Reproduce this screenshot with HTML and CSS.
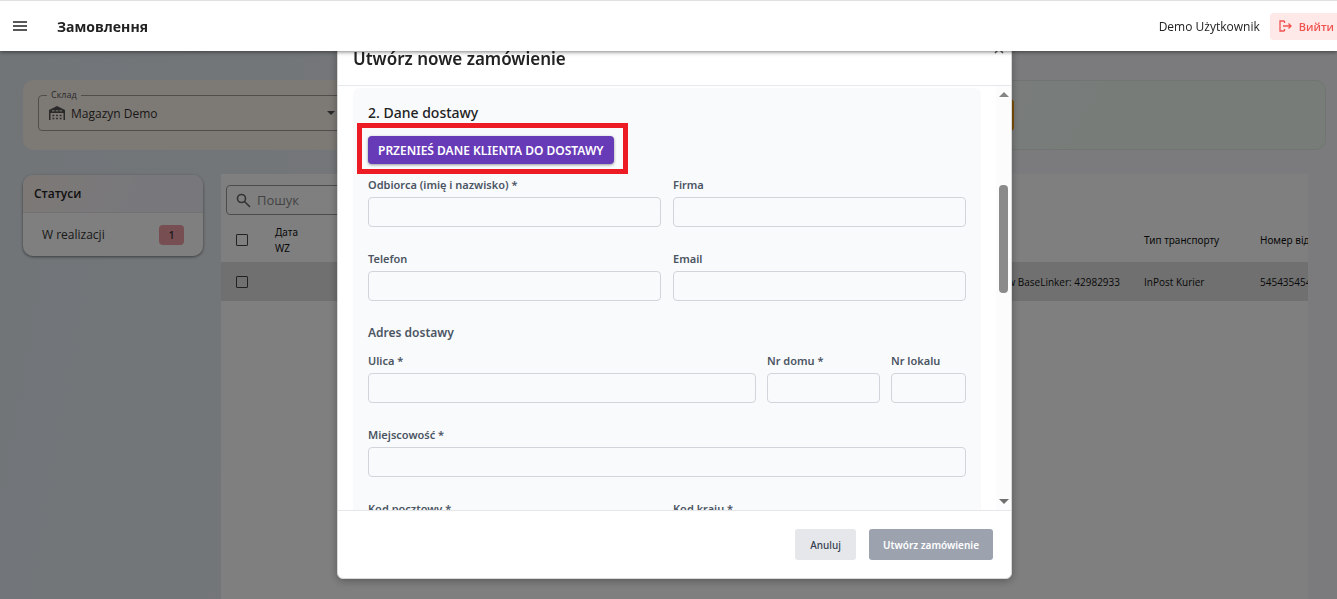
FILE: index.html
```html
<!DOCTYPE html>
<html lang="uk">
<head>
    <meta charset="UTF-8">
    <meta name="viewport" content="width=device-width, initial-scale=1.0">
    <title>Замовлення</title>
    <link rel="stylesheet" href="styles.css">
</head>
<body>
    <header class="topbar">
        <button class="menu-btn" aria-label="Menu">
            <svg width="14" height="10" viewBox="0 0 14 10"><path d="M0 1h14M0 5h14M0 9h14" stroke="#222" stroke-width="1.5"/></svg>
        </button>
        <h1>Замовлення</h1>
        <span class="user">Demo Użytkownik</span>
        <button class="logout">
            <svg width="13" height="12" viewBox="0 0 13 12" fill="none" stroke="#ef5350" stroke-width="1.3"><path d="M5.5 1H1v10h4.500M5.500 1v2M5.500 11V9M4 6h8M9.500 3.500L12 6 9.500 8.500"/></svg>
            Вийти
        </button>
    </header>

    <main class="page">
        <div class="filters">
            <div class="card card-warm">
                <div class="select-box">
                    <label for="warehouse">Склад</label>
                    <svg class="warehouse-icon" width="16" height="14" viewBox="0 0 16 14"><path d="M0 4l8-4 8 4v10h-1.500V7h-13v7H0z" fill="#555"/><path d="M3 4.800h2.500M6.800 4.800h2.500M10.500 4.800H13" stroke="#c8c0b8" stroke-width="1.400"/><path d="M3.500 9.500h9M3.500 12.500h9" stroke="#555" stroke-width="1.500" stroke-dasharray="1.800 1.800"/></svg>
                    <select id="warehouse"><option>Magazyn Demo</option></select>
                    <svg class="arrow" width="8" height="4" viewBox="0 0 8 4"><path d="M0 0h8L4 4z" fill="#555"/></svg>
                </div>
            </div>
            <div class="card card-green">
                <button class="add-btn" aria-label="Utwórz"></button>
            </div>
        </div>

        <div class="content">
            <aside class="statuses">
                <h2>Статуси</h2>
                <a href="#" class="status">W realizacji <span class="badge">1</span></a>
            </aside>

            <section class="orders">
                <div class="search">
                    <svg width="15" height="15" viewBox="0 0 15 15" fill="none" stroke="#666" stroke-width="1.6"><circle cx="5.500" cy="5.500" r="4"/><path d="M8.500 8.500L14 14"/></svg>
                    <input type="text" placeholder="Пошук" aria-label="Пошук">
                </div>
                <table>
                    <thead>
                        <tr>
                            <th class="col-check"><input type="checkbox" aria-label="Всі"></th>
                            <th class="col-date">Дата WZ</th>
                            <th></th>
                            <th class="col-transport">Тип транспорту</th>
                            <th class="col-number">Номер від</th>
                        </tr>
                    </thead>
                    <tbody>
                        <tr>
                            <td class="col-check"><input type="checkbox" aria-label="42982933"></td>
                            <td></td>
                            <td class="note">w BaseLinker: 42982933</td>
                            <td>InPost Kurier</td>
                            <td>545435454</td>
                        </tr>
                    </tbody>
                </table>
            </section>
        </div>
    </main>

    <div class="overlay">
        <form class="modal">
            <div class="modal-header">
                <h2>Utwórz nowe zamówienie</h2>
                <button type="button" class="close" aria-label="Zamknij">
                    <svg width="10" height="10" viewBox="0 0 10 10"><path d="M1 1l8 8M9 1L1 9" stroke="#555" stroke-width="1.5"/></svg>
                </button>
            </div>

            <div class="modal-body">
                <div class="scroll-area">
                    <div class="delivery">
                        <h3>2. Dane dostawy</h3>
                        <div class="highlight">
                            <button type="button" class="copy-btn">PRZENIEŚ DANE KLIENTA DO DOSTAWY</button>
                        </div>
                        <div class="grid halves">
                            <div class="field"><label for="name">Odbiorca (imię i nazwisko) *</label><input type="text" id="name"></div>
                            <div class="field"><label for="company">Firma</label><input type="text" id="company"></div>
                            <div class="field"><label for="phone">Telefon</label><input type="text" id="phone"></div>
                            <div class="field"><label for="email">Email</label><input type="email" id="email"></div>
                        </div>
                        <h4>Adres dostawy</h4>
                        <div class="grid street">
                            <div class="field"><label for="street">Ulica *</label><input type="text" id="street"></div>
                            <div class="field"><label for="house">Nr domu *</label><input type="text" id="house"></div>
                            <div class="field"><label for="flat">Nr lokalu</label><input type="text" id="flat"></div>
                        </div>
                        <div class="grid">
                            <div class="field"><label for="city">Miejscowość *</label><input type="text" id="city"></div>
                        </div>
                        <div class="grid halves">
                            <div class="field"><label for="zip">Kod pocztowy *</label><input type="text" id="zip"></div>
                            <div class="field"><label for="country">Kod kraju *</label><input type="text" id="country"></div>
                        </div>
                    </div>
                </div>
                <div class="scrollbar">
                    <svg width="10" height="5" viewBox="0 0 10 5"><path d="M0 5h10L5 0z" fill="#858585"/></svg>
                    <div class="track"><div class="thumb"></div></div>
                    <svg width="10" height="5" viewBox="0 0 10 5"><path d="M0 0h10L5 5z" fill="#707070"/></svg>
                </div>
            </div>

            <div class="modal-footer">
                <button type="button" class="btn btn-cancel">Anuluj</button>
                <button type="submit" class="btn btn-submit">Utwórz zamówienie</button>
            </div>
        </form>
    </div>
</body>
</html>
```
FILE: styles.css
```css
* {
    box-sizing: border-box;
}

body {
    margin: 0;
    height: 100vh;
    overflow: hidden;
    font-family: "Open Sans", "Noto Sans", sans-serif;
    font-size: 12px;
    color: #222;
    background: linear-gradient(100deg, #e2eaf1 0%, #e8edf2 25%, #f6f7fa 70%);
}

h1, h2, h3, h4 {
    margin: 0;
    font-weight: 600;
}

button, input, select {
    font-family: inherit;
}

button {
    border: 0;
    cursor: pointer;
}

/* top bar */
.topbar {
    position: relative;
    z-index: 20;
    display: flex;
    align-items: center;
    height: 51px;
    padding-left: 13px;
    background: #fff;
    border-top: 1px solid #e0e0e0;
    box-shadow: 0 1px 4px rgba(0, 0, 0, 0.5);
}

.menu-btn {
    display: flex;
    padding: 0;
    margin-right: 30px;
    background: none;
}

.topbar h1 {
    font-size: 14px;
    font-weight: 700;
}

.user {
    margin-left: auto;
    margin-right: 10px;
}

.logout {
    display: flex;
    align-items: center;
    gap: 7px;
    height: 27px;
    padding: 0 3px 0 9px;
    border-radius: 4px 0 0 4px;
    background: #ffe8e8;
    color: #ef5350;
    font-size: 11px;
    font-weight: 600;
}

/* page */
.page {
    display: flex;
    flex-direction: column;
    height: calc(100vh - 51px);
    padding: 29px 0 0 23px;
}

.filters {
    display: flex;
    gap: 12px;
    padding-right: 11px;
    margin-bottom: 24px;
}

.card {
    height: 70px;
    padding: 15px;
    border-radius: 10px;
}

.card-warm {
    width: 338px;
    background: #fbf2ea;
}

.card-green {
    flex: 1;
    display: flex;
    align-items: center;
    border: 1px solid #e0eae2;
    background: linear-gradient(120deg, #f4f6fa 40%, #f0f9f2 80%);
}

.add-btn {
    width: 625px;
    height: 32px;
    border-radius: 4px;
    background: #f59e0b;
}

.select-box {
    position: relative;
    display: flex;
    align-items: center;
    gap: 6px;
    height: 36px;
    padding: 0 10px;
    border: 1px solid #a09c96;
    border-radius: 4px;
}

.select-box label {
    position: absolute;
    top: -8px;
    left: 8px;
    padding: 0 4px;
    font-size: 9px;
    line-height: 14px;
    color: #555;
    background: #fbf2ea;
}

.select-box select {
    flex: 1;
    padding: 0;
    border: 0;
    appearance: none;
    background: none;
    font-size: 12px;
    color: #333;
}

.content {
    flex: 1;
    display: flex;
    align-items: flex-start;
    gap: 18px;
    padding-right: 29px;
}

.statuses {
    width: 180px;
    margin-top: 1px;
    border-radius: 10px;
    background: #fff;
    box-shadow: 0 1px 3px rgba(0, 0, 0, 0.5);
}

.statuses h2 {
    padding: 0 11px;
    font-size: 12px;
    line-height: 37px;
    border-bottom: 1px solid #e4e4e8;
    border-radius: 10px 10px 0 0;
    background: linear-gradient(120deg, #fbf1ea, #f1f1f8 60%);
}

.status {
    display: flex;
    align-items: center;
    justify-content: space-between;
    height: 43px;
    padding: 0 19px;
    color: #333;
    text-decoration: none;
}

.badge {
    width: 25px;
    border-radius: 4px;
    background: #ee9ca4;
    font-size: 10px;
    font-weight: 600;
    line-height: 20px;
    text-align: center;
}

/* orders table */
.orders {
    flex: 1;
    align-self: stretch;
    min-width: 0;
    overflow: hidden;
    padding-top: 11px;
    background: #fff;
}

.search {
    display: flex;
    align-items: center;
    gap: 6px;
    width: 240px;
    height: 30px;
    margin-left: 5px;
    padding: 0 9px;
    border: 1px solid #999;
    border-radius: 4px;
}

.search input {
    flex: 1;
    min-width: 0;
    padding: 0;
    border: 0;
    background: none;
    font-size: 13px;
}

.search input::placeholder {
    color: #888;
}

table {
    width: calc(100% + 90px);
    margin-top: 2px;
    table-layout: fixed;
    border-collapse: collapse;
    font-size: 10px;
    line-height: 16px;
    color: #111;
}

th, td {
    padding: 0 12px;
    text-align: left;
    font-weight: 400;
    white-space: nowrap;
}

th {
    font-family: "Noto Sans", sans-serif;
}

thead tr {
    height: 45px;
}

tbody tr {
    height: 39px;
    background: #e0e0e0;
}

.col-check {
    width: 42px;
    padding: 0 15px;
}

.col-date {
    width: 60px;
    white-space: normal;
}

.col-transport {
    width: 116px;
}

.col-number {
    width: 150px;
}

.note {
    text-align: right;
}

table input {
    display: block;
    width: 12px;
    height: 12px;
    margin: 0;
    appearance: none;
    border: 1px solid #444;
    border-radius: 1px;
}

/* modal */
.overlay {
    position: fixed;
    inset: 0;
    z-index: 10;
    display: flex;
    justify-content: center;
    padding: 21px 0 20px 12px;
    background: rgba(0, 0, 0, 0.5);
}

.modal {
    display: flex;
    flex-direction: column;
    width: 675px;
    max-width: 100%;
    overflow: hidden;
    border: 1px solid #d8d8d8;
    border-radius: 6px;
    background: #fff;
    box-shadow: 0 2px 8px rgba(0, 0, 0, 0.3);
    font-family: "Noto Sans", "Open Sans", sans-serif;
}

.modal-header {
    display: flex;
    align-items: flex-end;
    justify-content: space-between;
    height: 64px;
    flex-shrink: 0;
    padding: 0 7px 14px 15px;
    border-bottom: 1px solid #e5e7eb;
}

.modal-header h2 {
    font-size: 17px;
    line-height: 24px;
}

.close {
    align-self: flex-start;
    display: flex;
    padding: 0;
    margin-top: 22px;
    background: none;
}

.modal-body {
    flex: 1;
    display: flex;
    min-height: 0;
}

.scroll-area {
    flex: 1;
    overflow: hidden;
    padding: 2px 15px 0;
}

.delivery {
    padding: 15px;
    border-radius: 6px;
    background: #f9fafc;
}

.delivery h3 {
    margin-bottom: 13px;
    font-size: 14px;
    line-height: 20px;
    font-weight: 500;
}

.delivery h4 {
    margin: -2px 0 10px;
    font-size: 12px;
    line-height: 20px;
    font-weight: 600;
    color: #4b5563;
}

/* red frame around the button */
.highlight {
    position: relative;
    width: fit-content;
    margin-bottom: 13px;
}

.highlight::after {
    content: "";
    position: absolute;
    inset: -13px -14px -10px -11px;
    border: 5px solid #ed1c24;
    pointer-events: none;
}

.copy-btn {
    display: block;
    height: 28px;
    padding: 0 10px;
    border-radius: 4px;
    background: #673ab7;
    color: #fff;
    font-size: 12px;
    font-weight: 600;
    box-shadow: 0 1px 3px rgba(0, 0, 0, 0.4);
}

.grid {
    display: grid;
    gap: 24px 12px;
    margin-bottom: 24px;
}

.halves {
    grid-template-columns: 1fr 1fr;
}

.street {
    grid-template-columns: 388fr 113fr 75fr;
    column-gap: 11px;
}

.field {
    display: flex;
    flex-direction: column;
    gap: 4px;
    min-width: 0;
}

.field label {
    font-size: 11px;
    font-weight: 600;
    line-height: 16px;
    color: #4b5563;
}

.field input {
    width: 100%;
    height: 30px;
    padding: 0 8px;
    border: 1px solid #d1d5db;
    border-radius: 4px;
    background: transparent;
}

.scrollbar {
    display: flex;
    flex-direction: column;
    align-items: center;
    width: 15px;
    padding: 6px 0;
    background: #fcfcfc;
}

.track {
    flex: 1;
    padding-top: 88px;
}

.thumb {
    width: 9px;
    height: 108px;
    border-radius: 4px;
    background: #8b8b8b;
}

.modal-footer {
    display: flex;
    justify-content: flex-end;
    gap: 13px;
    flex-shrink: 0;
    padding: 18px;
    border-top: 1px solid #e5e7eb;
}

.btn {
    height: 31px;
    padding: 0 15px;
    border-radius: 3px;
    font-size: 10px;
    font-weight: 500;
}

.btn-cancel {
    background: #e5e7eb;
    color: #374151;
}

.btn-submit {
    padding: 0 14px;
    background: #9ca3af;
    color: #fff;
    font-weight: 600;
}
```
